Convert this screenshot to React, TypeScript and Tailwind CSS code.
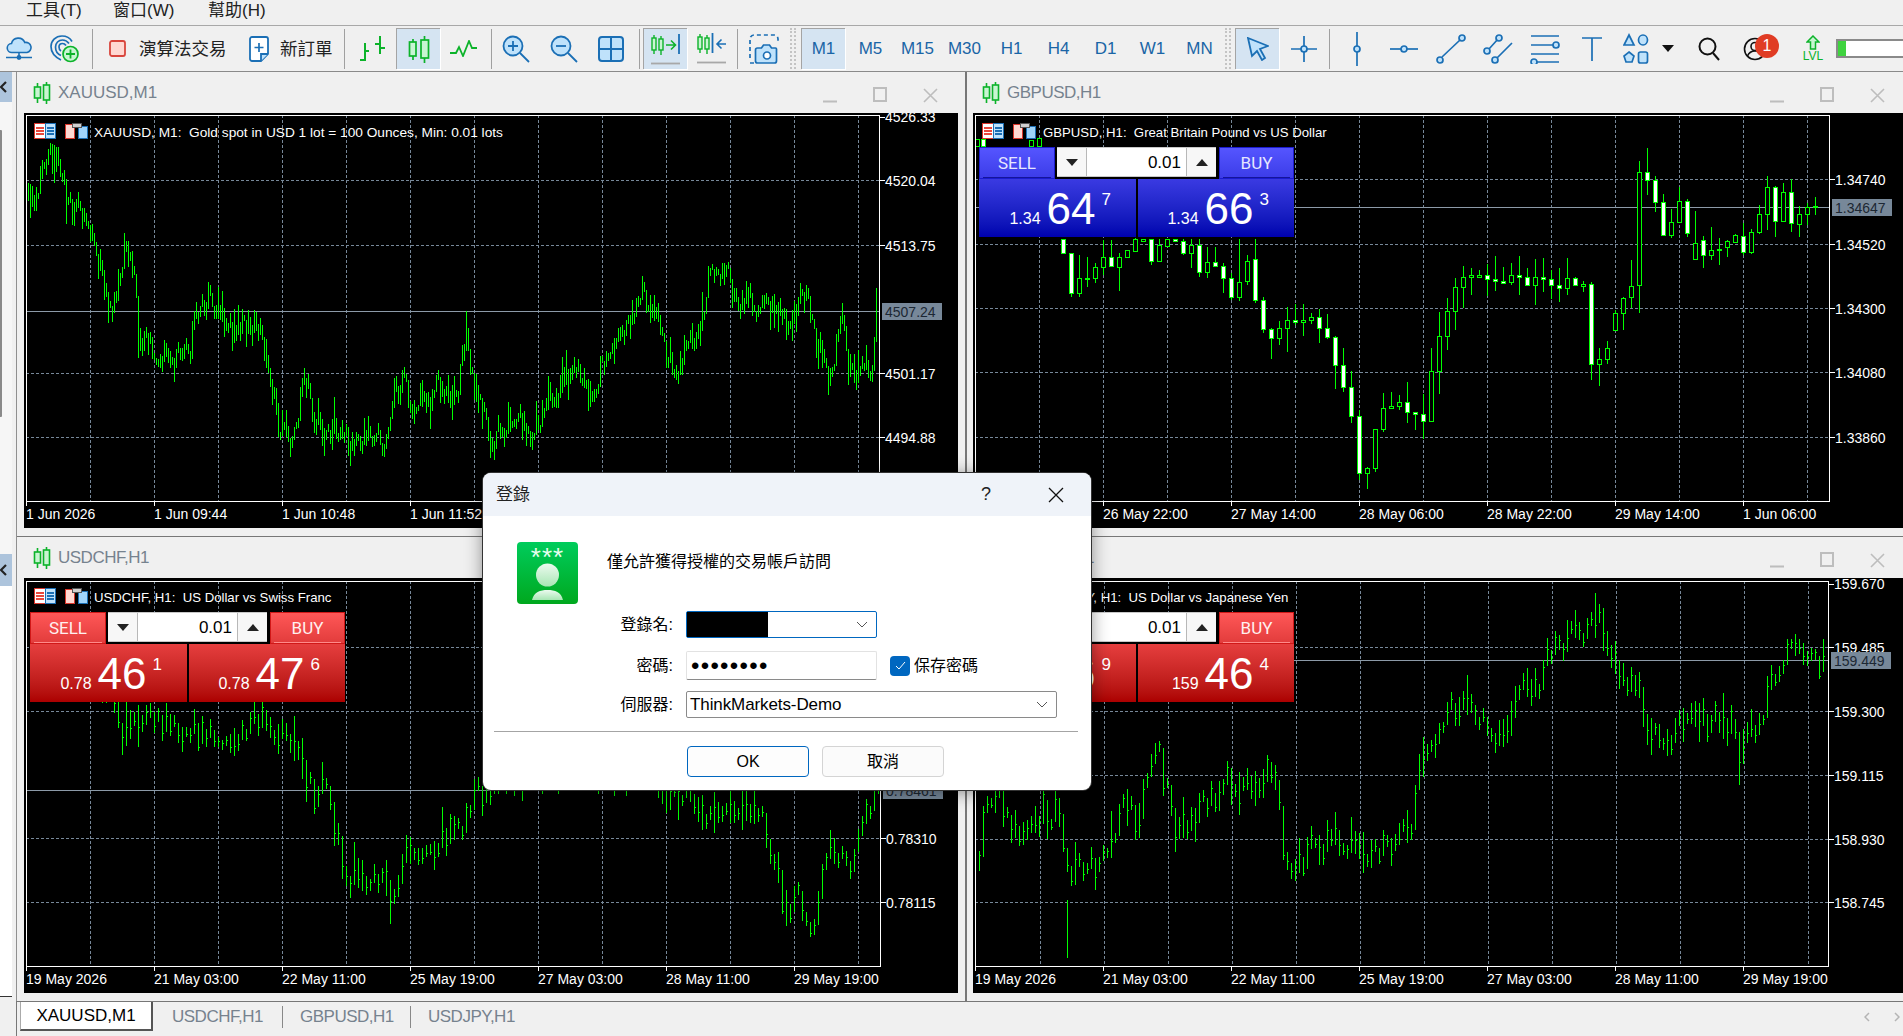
import React from 'react';

type P = [number, number];
const B = '#1b6fb5';
const F = '#bfe2fb';
const G = '#0cb32a';
const GF = '#c8f5d2';

function rng(seed: number) {
  let s = seed;
  return () => (s = (s * 16807) % 2147483647) / 2147483647;
}
function interp(pts: P[], x: number) {
  if (x <= pts[0][0]) return pts[0][1];
  for (let i = 1; i < pts.length; i++) {
    if (x <= pts[i][0]) {
      const [x0, y0] = pts[i - 1];
      const [x1, y1] = pts[i];
      return y0 + ((y1 - y0) * (x - x0)) / (x1 - x0);
    }
  }
  return pts[pts.length - 1][1];
}
function barsPath(pts: P[], x0: number, x1: number, step: number, seed: number, noise: number, a: number, b: number, ticks: boolean) {
  const r = rng(seed);
  let d = '';
  let prev = interp(pts, x0);
  for (let x = x0; x <= x1; x += step) {
    const base = interp(pts, x);
    const mid = base + (r() - 0.5) * noise;
    const h = a + r() * r() * (b - a);
    const t = Math.round(Math.min(mid - h, prev + 2));
    const l = Math.round(Math.max(mid + h, prev - 2));
    d += `M${x + 0.5} ${t}V${l}`;
    if (ticks) {
      const c = Math.round(mid + (r() - 0.5) * h) + 0.5;
      d += `M${x + 0.5} ${c}h1.5`;
    }
    prev = mid;
  }
  return d;
}

const xauPts: P[] = [[28,203],[43,173],[47,150],[60,163],[65,197],[80,210],[88,233],[100,267],[113,317],[117,283],[125,250],[135,270],[138,343],[147,340],[160,357],[177,357],[190,353],[195,310],[203,300],[217,307],[230,333],[250,327],[263,337],[270,377],[280,433],[292,440],[302,390],[308,377],[315,417],[323,430],[333,427],[353,447],[373,433],[388,443],[393,390],[405,377],[413,407],[430,403],[437,387],[457,392],[462,357],[467,333],[473,383],[483,403],[490,456],[497,436],[513,416],[530,433],[547,406],[563,380],[580,373],[590,403],[603,366],[617,333],[630,323],[643,290],[657,320],[667,353],[677,370],[687,340],[700,336],[707,283],[713,273],[728,276],[737,310],[747,293],[757,310],[763,296],[780,316],[790,333],[800,303],[808,303],[815,340],[827,373],[830,390],[838,330],[843,320],[848,376],[867,370],[872,376],[875,313],[878,310]];
const chfPts: P[] = [[30,650],[80,655],[115,700],[119,730],[143,720],[170,720],[191,733],[224,730],[239,743],[260,720],[284,733],[302,763],[314,797],[329,783],[338,833],[347,873],[380,880],[395,907],[404,843],[428,860],[440,833],[460,827],[470,797],[482,793],[500,777],[560,770],[640,770],[697,803],[721,820],[745,800],[769,833],[781,893],[787,920],[799,887],[811,927],[823,880],[835,843],[850,867],[859,833],[871,807],[878,800]];
const jpyPts: P[] = [[980,873],[983,807],[1001,800],[1019,847],[1031,823],[1043,807],[1058,813],[1067,873],[1091,870],[1109,847],[1126,807],[1138,830],[1150,760],[1162,760],[1174,840],[1192,823],[1210,797],[1228,780],[1252,780],[1276,763],[1285,873],[1300,860],[1324,840],[1348,847],[1378,853],[1396,833],[1410,823],[1420,767],[1437,747],[1449,707],[1467,703],[1485,733],[1503,737],[1521,697],[1539,680],[1548,647],[1563,640],[1581,630],[1596,620],[1608,640],[1617,673],[1635,680],[1647,733],[1665,737],[1683,717],[1707,723],[1730,727],[1739,753],[1748,733],[1760,727],[1766,700],[1775,673],[1784,653],[1802,660],[1823,660]];

type C = { x: number; t: number; b: number; hi: number; lo: number; f: boolean };
const z5 = [[310,418,460,418,460,1],[334,460,580,460,592,1],[358,535,578,465,592,0],[382,534,537,470,560,0],[406,502,535,490,550,0],[430,470,502,420,525,0],[454,470,498,420,500,1],[478,472,500,460,572,0],[502,450,472,450,475,0],[526,418,452,415,455,0],[550,418,423,418,424,0],[574,418,482,418,495,1],[598,435,482,418,485,0],[622,418,437,418,437,0],[646,418,423,418,427,1],[670,422,460,418,465,1],[694,435,460,418,505,0],[718,435,517,418,530,1],[742,487,517,440,535,0],[766,487,497,440,500,1],[790,498,535,490,580,1],[814,535,590,520,600,1],[838,545,590,418,602,0],[862,484,544,465,555,0],[886,478,600,418,610,1]];
const z8 = [[46,670,720,660,720,0],[70,625,670,622,720,0],[94,587,622,510,655,0],[118,245,585,213,668,0],[142,245,270,175,315,1],[166,270,335,258,365,1],[190,335,436,312,436,1],[214,395,436,358,443,0],[238,332,395,292,395,0],[262,332,430,326,440,1],[286,458,508,363,508,0],[310,450,496,438,533,1],[334,481,496,410,509,0],[358,476,478,445,525,0],[382,454,472,450,500,0],[406,436,455,432,460,0],[430,437,487,400,495,1],[454,425,487,418,493,0],[478,371,425,345,432,0],[502,290,373,258,420,0],[526,290,394,288,440,1],[550,305,394,280,395,0],[574,305,400,268,425,1],[598,371,403,348,440,0],[622,350,371,340,405,0],[646,349,352,322,375,0]];
const gbpMid: P[] = [[1255,300],[1262,334],[1268,346],[1286,313],[1305,316],[1317,318],[1329,346],[1341,388],[1353,419],[1362,495],[1371,455],[1377,413],[1396,394],[1414,419],[1422,425],[1432,364],[1444,316],[1462,273],[1481,273],[1499,277],[1517,273],[1535,282],[1553,291],[1565,282],[1584,291],[1590,358],[1602,364],[1614,328]];

function gbpCandles(): C[] {
  const out: C[] = [];
  z5.forEach(a => out.push({ x: Math.round(960 + a[0] / 3), t: Math.round(100 + a[1] / 3), b: Math.round(100 + a[2] / 3), hi: Math.round(100 + a[3] / 3), lo: Math.round(100 + a[4] / 3), f: !!a[5] }));
  const r = rng(77);
  let prev = 300;
  for (let x = 1263; x < 1610; x += 8) {
    const c = Math.round(interp(gbpMid, x) + (r() - 0.5) * 14);
    const t = Math.min(prev, c);
    const b = Math.max(prev, c, t + 2);
    out.push({ x, t, b, hi: t - Math.round(r() * 24), lo: b + Math.round(r() * 24), f: c > prev });
    prev = c;
  }
  z8.forEach(a => out.push({ x: Math.round(1600 + a[0] / 3), t: Math.round(90 + a[1] / 3), b: Math.round(90 + a[2] / 3), hi: Math.round(90 + a[3] / 3), lo: Math.round(90 + a[4] / 3), f: !!a[5] }));
  out.push({ x: 977, t: 139, b: 146, hi: 139, lo: 146, f: false });
  out.push({ x: 983, t: 139, b: 146, hi: 139, lo: 146, f: true });
  out.push({ x: 1031, t: 140, b: 146, hi: 140, lo: 146, f: false });
  out.push({ x: 1039, t: 138, b: 146, hi: 138, lo: 146, f: false });
  return out;
}

function LegendIcons({ x, y }: { x: number; y: number }) {
  return (
    <g transform={`translate(${x} ${y})`} shapeRendering="crispEdges">
      <rect x="0.5" y="0.5" width="21" height="15" fill="#fff" stroke="#d9362b" />
      <rect x="11" y="0.5" width="10.5" height="15" fill="#bfe2fb" stroke="#1b6fb5" />
      <path d="M2 4.5h8M2 7.5h8M2 10.5h8" stroke="#e8483c" strokeWidth="2" />
      <path d="M13 4.500h7M13 7.500h7M13 10.500h7" stroke="#1b6fb5" strokeWidth="2" />
      <path d="M40 1.500h-8.500v14h9v-10z" fill="#ffd9d2" stroke="#d9362b" />
      <rect x="44.500" y="3.500" width="9" height="12" fill="#9fd4fa" stroke="#1b6fb5" />
      <rect x="38" y="0" width="9" height="4" fill="#cfcfcf" stroke="#555" strokeWidth="1" />
    </g>
  );
}

type ChartSpec = {
  box: [number, number, number, number];
  plot: [number, number, number, number];
  vs: number[];
  hs: [number, string][];
  times: [number, string][];
  ticks: number[];
  top?: [number, string];
  cur: [number, string];
  legend: [number, number, number, string];
  legendSize: string;
  path?: string;
  candles?: C[];
};

function ChartSvg({ s }: { s: ChartSpec }) {
  const [bx, by, bw, bh] = s.box;
  const [l, t, r, b] = s.plot;
  return (
    <svg viewBox={`${bx} ${by} ${bw} ${bh}`} width={bw} height={bh} className="block">
      <g shapeRendering="crispEdges" stroke="#778899" strokeDasharray="3 2">
        {s.vs.map(x => <path key={x} d={`M${x + 0.5} ${t}V${b}`} />)}
        {s.hs.map(([y]) => <path key={y} d={`M${l} ${y + 0.5}H${r}`} />)}
      </g>
      <path d={`M${l} ${s.cur[0] + 0.5}H${r}`} stroke="#8c9aa8" shapeRendering="crispEdges" />
      {s.path && <path d={s.path} stroke="#00ff00" fill="none" shapeRendering="crispEdges" />}
      {s.candles && (
        <g shapeRendering="crispEdges">
          {s.candles.map((c, i) => (
            <g key={i}>
              <path d={`M${c.x + 0.5} ${c.hi}V${c.lo}`} stroke="#00ff00" />
              <rect x={c.x - 1.5} y={c.t + 0.5} width={4} height={Math.max(1, c.b - c.t)} fill={c.f ? '#fff' : '#000'} stroke="#00ff00" />
            </g>
          ))}
        </g>
      )}
      <g shapeRendering="crispEdges" stroke="#fff" fill="none">
        <path d={`M${l + 0.5} ${b + 0.5}V${t + 0.5}H${r + 0.5}V${b + 0.5}H${l + 0.5}`} />
        {s.ticks.map(x => <path key={x} d={`M${x + 0.5} ${b}v5`} />)}
        {s.hs.map(h => <path key={h[0]} d={`M${r} ${h[0] + 0.5}h6`} />)}
        {s.top && <path d={`M${r} ${s.top[0] + 0.5}h6`} />}
      </g>
      <g className="text-[14px]" fill="#fff">
        {s.hs.map(([y, v]) => <text key={y} x={r + 6} y={y + 5.5}>{v}</text>)}
        {s.top && <text x={r + 6} y={s.top[0] + 5}>{s.top[1]}</text>}
        {s.times.map(([x, v]) => <text key={x} x={x - 1} y={b + 18}>{v}</text>)}
      </g>
      <text x={s.legend[2]} y={s.legend[1] + 13.5} fill="#fff" className={`whitespace-pre ${s.legendSize}`}>{s.legend[3]}</text>
      <rect x={r + 3} y={s.cur[0] - 8} width={60} height={17} fill="#778899" />
      <text x={r + 6} y={s.cur[0] + 5.5} fill="#1c2733" className="text-[14px]">{s.cur[1]}</text>
      <LegendIcons x={s.legend[0]} y={s.legend[1]} />
    </svg>
  );
}

const range = (a: number, n: number, st: number) => Array.from({ length: n }, (_, i) => a + i * st);

const specs: Record<string, ChartSpec> = {
  xau: {
    box: [24, 113, 933, 415], plot: [26, 115, 879, 501], vs: range(90, 13, 64), hs: [[180,'4520.04'],[245,'4513.75'],[373,'4501.17'],[437,'4494.88']],
    times: [[27,'1 Jun 2026'],[155,'1 Jun 09:44'],[283,'1 Jun 10:48'],[411,'1 Jun 11:52'],[539,'1 Jun 12:56'],[667,'1 Jun 14:00'],[795,'1 Jun 15:04']],
    ticks: range(26, 7, 128), top: [117,'4526.33'], cur: [311,'4507.24'], legend: [34, 123, 94, 'XAUUSD, M1:  Gold spot in USD 1 lot = 100 Ounces, Min: 0.01 lots'], legendSize: 'text-[13.7px]',
    path: barsPath(xauPts, 28, 877, 2, 4242, 26, 3, 20, false),
  },
  gbp: {
    box: [973, 113, 930, 415], plot: [975, 115, 1829, 501], vs: range(1039, 13, 64), hs: [[179,'1.34740'],[244,'1.34520'],[308,'1.34300'],[372,'1.34080'],[437,'1.33860']],
    times: [[976,'26 May 06:00'],[1104,'26 May 22:00'],[1232,'27 May 14:00'],[1360,'28 May 06:00'],[1488,'28 May 22:00'],[1616,'29 May 14:00'],[1744,'1 Jun 06:00']],
    ticks: range(975, 7, 128), cur: [207,'1.34647'], legend: [982, 123, 1043, 'GBPUSD, H1:  Great Britain Pound vs US Dollar'], legendSize: 'text-[13.2px]',
    candles: gbpCandles(),
  },
  chf: {
    box: [24, 578, 933, 415], plot: [26, 581, 880, 966], vs: range(90, 13, 64), hs: [[647,'0.78700'],[711,'0.78505'],[838,'0.78310'],[902,'0.78115']],
    times: [[27,'19 May 2026'],[155,'21 May 03:00'],[283,'22 May 11:00'],[411,'25 May 19:00'],[539,'27 May 03:00'],[667,'28 May 11:00'],[795,'29 May 19:00']],
    ticks: range(26, 7, 128), cur: [790,'0.78461'], legend: [34, 588, 94, 'USDCHF, H1:  US Dollar vs Swiss Franc'], legendSize: 'text-[13.2px]',
    path: barsPath(chfPts, 30, 878, 4, 991, 30, 5, 26, true),
  },
  jpy: {
    box: [973, 578, 930, 415], plot: [975, 581, 1828, 966], vs: range(1040, 13, 64), hs: [[647,'159.485'],[711,'159.300'],[775,'159.115'],[839,'158.930'],[902,'158.745']],
    times: [[976,'19 May 2026'],[1104,'21 May 03:00'],[1232,'22 May 11:00'],[1360,'25 May 19:00'],[1488,'27 May 03:00'],[1616,'28 May 11:00'],[1744,'29 May 19:00']],
    ticks: range(975, 7, 128), top: [584,'159.670'], cur: [660,'159.449'], legend: [982, 588, 1043, 'USDJPY, H1:  US Dollar vs Japanese Yen'], legendSize: 'text-[13.2px]',
    path: barsPath(jpyPts, 979, 1824, 4, 5150, 30, 5, 26, true) + 'M1067.5 900V958',
  },
};

function PriceCell({ tone, head, big, sup, w }: { tone: 'blue' | 'red'; head: string; big: string; sup: string; w: string }) {
  return (
    <div className={`${w} h-[58px] flex items-baseline justify-end pr-[25px] pt-[8px] text-white bg-linear-to-b ${tone === 'blue' ? 'from-[#3a3ae2] to-[#0000ae]' : 'from-[#e63e3e] to-[#ac0000]'}`}>
      <span className="text-[16px] leading-none mr-[6px]">{head}</span>
      <span className="text-[44px] leading-[44px]">{big}</span>
      <span className="self-start mt-[4px] ml-[6px] text-[17px] leading-none">{sup}</span>
    </div>
  );
}

function Panel({ tone, a, b }: { tone: 'blue' | 'red'; a: [string, string, string]; b: [string, string, string] }) {
  const top = tone === 'blue'
    ? 'from-[#5555ff] to-[#3c3ce8] border-[#1c1ccf] text-[#e6e6ff]'
    : 'from-[#ff5757] to-[#e23c3c] border-[#d01818] text-[#fff0f0]';
  const rule = tone === 'blue' ? 'border-[#15159a]' : 'border-[#ff8a8a]';
  return (
    <div className="absolute left-[6px] top-[34px] w-[315px] h-[90px] bg-black">
      <div className="flex h-[32px]">
        <div className={`w-[76px] h-[32px] border px-[3px] bg-linear-to-b ${top} font-['Roboto',sans-serif]`}>
          <div className={`h-[30px] border-b text-[17px] leading-[31px] text-center ${rule}`}>SELL</div>
        </div>
        <div className="ml-[2px] w-[159px] h-[30px] flex bg-white border-y border-[#c8c8c8]">
          <div className="w-[30px] bg-[#f7f7f7] border-r border-[#b8b8b8] flex items-center justify-center">
            <svg width="12" height="7" viewBox="0 0 12 7"><path d="M0 0h12L6 7z" fill="#222" /></svg>
          </div>
          <div className="flex-1 text-right pr-[5px] text-[17px] leading-[30px] text-black">0.01</div>
          <div className="w-[30px] bg-[#f7f7f7] border-l border-[#b8b8b8] flex items-center justify-center">
            <svg width="12" height="7" viewBox="0 0 12 7"><path d="M0 7h12L6 0z" fill="#222" /></svg>
          </div>
        </div>
        <div className={`ml-[3px] w-[75px] h-[32px] border px-[3px] bg-linear-to-b ${top} font-['Roboto',sans-serif]`}>
          <div className={`h-[30px] border-b text-[17px] leading-[31px] text-center ${rule}`}>BUY</div>
        </div>
      </div>
      <div className="flex gap-[2px]">
        <PriceCell tone={tone} head={a[0]} big={a[1]} sup={a[2]} w="w-[157px]" />
        <PriceCell tone={tone} head={b[0]} big={b[1]} sup={b[2]} w="w-[156px]" />
      </div>
    </div>
  );
}

function TitleCandle() {
  return (
    <svg width="18" height="22" viewBox="0 0 18 22" fill={GF} stroke={G} strokeWidth="1.6">
      <path d="M4.5 1v4M4.5 16v5M13.5 0v3M13.5 18v4" fill="none" />
      <rect x="1.5" y="5" width="6" height="11" />
      <rect x="10.5" y="3" width="6" height="15" />
    </svg>
  );
}

function WinBtns({ pr }: { pr: string }) {
  return (
    <div className={`ml-auto flex items-center pt-[5px] ${pr}`}>
      <div className="w-[50px] flex justify-center">
        <svg width="16" height="16" viewBox="0 0 16 16"><path d="M1 14.5h14" stroke="#bdbdbd" strokeWidth="2" /></svg>
      </div>
      <div className="w-[50px] flex justify-center">
        <svg width="14" height="16" viewBox="0 0 14 16"><rect x="1" y="1" width="12" height="13" fill="none" stroke="#bdbdbd" strokeWidth="2" /></svg>
      </div>
      <div className="w-[50px] flex justify-center">
        <svg width="15" height="15" viewBox="0 0 15 15"><path d="M1 1l13 13M14 1L1 14" stroke="#bdbdbd" strokeWidth="1.6" /></svg>
      </div>
    </div>
  );
}

function ChartWindow({ title, titleCn, spec, side, panel }: { title: string; titleCn?: string; spec: ChartSpec; side: 'l' | 'r'; panel?: React.ReactNode }) {
  return (
    <div className={`h-[464px] ${side === 'l' ? 'pl-[7px] pr-[7px]' : 'pl-[6px]'}`}>
      <div className={`h-[41px] flex items-center gap-[7px] ${side === 'l' ? '-ml-[7px] -mr-[7px] pl-[16px]' : '-ml-[6px] pl-[15px]'}`}>
        <TitleCandle />
        <span className={`text-[17px] text-[#76828e] ${titleCn ?? ''}`}>{title}</span>
        <WinBtns pr={side === 'l' ? 'pr-[10px]' : 'pr-[1px]'} />
      </div>
      <div className="relative h-[415px] bg-black">
        <ChartSvg s={spec} />
        {panel}
      </div>
    </div>
  );
}

function ToolBtn({ w, active, cn, children }: { w: string; active?: boolean; cn?: string; children: React.ReactNode }) {
  return (
    <div className={`${w} h-[41px] shrink-0 flex items-center justify-center ${active ? 'bg-[#d5e4f2] border-t border-l border-[#a4a4a4] shadow-[1px_1px_0_#fff]' : ''} ${cn ?? ''}`}>
      {children}
    </div>
  );
}
const Sep = () => <div className="w-px h-[40px] bg-[#a0a0a0] shrink-0" />;
const Grip = () => <div className="w-[6px] h-[41px] shrink-0 border-x-2 border-dotted border-[#c4c4c4]" />;
const Tf = ({ w, active, v }: { w: string; active?: boolean; v: string }) => (
  <ToolBtn w={w} active={active}><span className="text-[17px] text-[#1a65a6]">{v}</span></ToolBtn>
);

const CloudI = () => (
  <svg width="28" height="24" viewBox="0 0 28 24" fill={F} stroke={B} strokeWidth="1.6">
    <path d="M7 15.5a4.5 4.5 0 0 1-.5-9 7 7 0 0 1 13.3-1A5 5 0 0 1 22 15.5z" />
    <path d="M14 15.5v5M1 20.5h26" fill="none" />
    <circle cx="14" cy="20.5" r="1.6" fill={B} />
  </svg>
);
const SignalI = () => (
  <svg width="30" height="28" viewBox="0 0 30 28" fill="none" stroke={B} strokeWidth="1.7">
    <path d="M11 25C5 22 1 17 1 11.5 1 6 5.5 1 12 1c4.500 0 8 2 10 5.500" />
    <path d="M11 20.500C7.500 19 5.500 15.500 5.500 12 5.500 8 8.500 5 12.500 5c3 0 5 1.500 6.500 3.500" />
    <path d="M11 16c-1.500-1-2-2.500-2-4 0-2 1.500-3.500 3.500-3.500 1.500 0 2.500.5 3.500 2" />
    <circle cx="20.500" cy="19" r="7.500" fill={GF} stroke={G} />
    <path d="M20.500 14.500v9M16 19h9" stroke={G} strokeWidth="1.800" />
  </svg>
);
const StopI = () => (
  <svg width="17" height="17" viewBox="0 0 17 17"><rect x="1" y="1" width="15" height="15" rx="2" fill="#ffd8d2" stroke="#d9453c" strokeWidth="1.800" /></svg>
);
const DocI = () => (
  <svg width="20" height="26" viewBox="0 0 20 26" fill="#fff" stroke={B} strokeWidth="1.800">
    <path d="M3 1h14a2 2 0 0 1 2 2v15l-7 7H3a2 2 0 0 1-2-2V3a2 2 0 0 1 2-2z" />
    <path d="M19 18h-7v7" fill={F} />
    <path d="M10 7v9M5.500 11.500h9" strokeWidth="1.700" />
  </svg>
);
const BarsI = () => (
  <svg width="26" height="27" viewBox="0 0 26 27" fill="none" stroke={G} strokeWidth="2">
    <path d="M6 8v18M1 25h5M6 16h4M21 1v18M16 9h5M21 13h5" />
  </svg>
);
const CandleI = () => (
  <svg width="22" height="27" viewBox="0 0 22 27" fill={GF} stroke={G} strokeWidth="1.700">
    <path d="M5 3v5M5 20v4M16.500 0v5M16.500 21v6" fill="none" />
    <rect x="1.500" y="6" width="6.500" height="14" />
    <rect x="13" y="4" width="7.500" height="18" />
  </svg>
);
const LineI = () => (
  <svg width="27" height="17" viewBox="0 0 27 17" fill="none" stroke={G} strokeWidth="1.800"><path d="M0 13h6l3-6 4 9 6-15 3 7h5" /></svg>
);
const ZoomI = ({ plus }: { plus?: boolean }) => (
  <svg width="28" height="28" viewBox="0 0 28 28" fill="none" stroke={B} strokeWidth="1.800">
    <circle cx="11" cy="11" r="9.500" fill={F} />
    <path d="M18 18l9 9" />
    <path d={plus ? 'M11 6v10M6 11h10' : 'M6 11h10'} />
  </svg>
);
const TileI = () => (
  <svg width="26" height="26" viewBox="0 0 26 26" fill={F} stroke={B} strokeWidth="2">
    <rect x="1" y="1" width="24" height="24" rx="3" />
    <path d="M13 1v24M1 13h24" />
  </svg>
);
const MiniC = () => (
  <g fill={GF} stroke={G} strokeWidth="1.400">
    <path d="M3 0v3M3 15v4M10 1v3M10 15v5" fill="none" />
    <rect x="1" y="3" width="4" height="12" />
    <rect x="8" y="4" width="4" height="11" />
  </g>
);
const AutoI = () => (
  <svg width="30" height="33" viewBox="0 0 30 33" fill="none">
    <g transform="translate(0 2)"><MiniC /></g>
    <path d="M15 12h9M20 7.500l4.500 4.500-4.500 4.500" stroke={G} strokeWidth="1.600" />
    <path d="M28 1v20" stroke={B} strokeWidth="1.800" />
    <path d="M0 30.500h29" stroke="#a8a8a8" strokeWidth="1.800" />
  </svg>
);
const ShiftI = () => (
  <svg width="30" height="33" viewBox="0 0 30 33" fill="none">
    <g transform="translate(0 2)"><MiniC /></g>
    <path d="M15.500 1v20" stroke={B} strokeWidth="1.800" />
    <path d="M29 12h-9M24.500 7.500L20 12l4.500 4.500" stroke={B} strokeWidth="1.600" />
    <path d="M0 30.500h29" stroke="#a8a8a8" strokeWidth="1.800" />
  </svg>
);
const ShotI = () => (
  <svg width="30" height="30" viewBox="0 0 30 30" fill="none" stroke={B} strokeWidth="1.700">
    <path d="M1 24V5a4 4 0 0 1 4-4h20a4 4 0 0 1 4 4v4M5 29H1" strokeDasharray="4 3" />
    <path d="M10 14h4l2-3h6l2 3h4a1 1 0 0 1 1 1v12a2 2 0 0 1-2 2H10a2 2 0 0 1-2-2V16a2 2 0 0 1 2-2z" fill={F} transform="translate(-1.500 0)" />
    <circle cx="18" cy="21.500" r="3.500" fill="#fff" />
  </svg>
);
const CursorI = () => (
  <svg width="22" height="24" viewBox="0 0 22 24" fill={F} stroke={B} strokeWidth="1.800"><path d="M1 1l20 8-8 3 5 9-3 2-5-9-5 5z" /></svg>
);
const CrossI = () => (
  <svg width="26" height="26" viewBox="0 0 26 26" fill="none" stroke={B} strokeWidth="1.700">
    <path d="M13 0v26M0 13h26" /><circle cx="13" cy="13" r="3" fill={F} />
  </svg>
);
const VLineI = () => (
  <svg width="8" height="34" viewBox="0 0 8 34" fill="none" stroke={B} strokeWidth="1.700"><path d="M4 0v34" /><circle cx="4" cy="17" r="3" fill={F} /></svg>
);
const HLineI = () => (
  <svg width="28" height="8" viewBox="0 0 28 8" fill="none" stroke={B} strokeWidth="1.700"><path d="M0 4h28" /><circle cx="14" cy="4" r="3" fill={F} /></svg>
);
const TrendI = () => (
  <svg width="30" height="30" viewBox="0 0 30 30" fill="none" stroke={B} strokeWidth="1.700">
    <path d="M6 23L24 6" /><circle cx="4" cy="26" r="3" fill={F} /><circle cx="26" cy="4" r="3" fill={F} />
  </svg>
);
const ChannelI = () => (
  <svg width="30" height="30" viewBox="0 0 30 30" fill="none" stroke={B} strokeWidth="1.700">
    <path d="M6 15l9-10M14 24l15-15" /><circle cx="4" cy="17" r="3" fill={F} /><circle cx="16" cy="4" r="3" fill={F} /><circle cx="12" cy="26" r="3" fill={F} />
  </svg>
);
const FiboI = () => (
  <svg width="30" height="30" viewBox="0 0 30 30" fill="none" stroke={B} strokeWidth="1.700">
    <path d="M1 2h28M1 11h24M1 20h28M6 28h23" /><circle cx="26" cy="11" r="3" fill={F} /><circle cx="4" cy="28" r="3" fill={F} />
  </svg>
);
const TextI = () => (
  <svg width="20" height="24" viewBox="0 0 20 24" fill="none" stroke={B} strokeWidth="1.700"><path d="M0 1h20M10 1v23" /></svg>
);
const ShapesI = () => (
  <svg width="26" height="32" viewBox="0 0 26 32" fill={F} stroke={B} strokeWidth="1.700">
    <path d="M6 2l5 10H1z" /><ellipse cx="20" cy="7" rx="4.500" ry="5" />
    <path d="M6 19l5 4-2 6H3l-2-6z" /><rect x="15.500" y="19" width="9" height="11" rx="2" />
  </svg>
);
const SearchI = () => (
  <svg width="22" height="24" viewBox="0 0 22 24" fill="none" stroke="#111" strokeWidth="2"><circle cx="9.500" cy="9.500" r="8" /><path d="M15 16l6 7" /></svg>
);
const UserI = () => (
  <svg width="24" height="24" viewBox="0 0 24 24" fill="none" stroke="#111" strokeWidth="1.600">
    <circle cx="12" cy="12" r="10.500" /><circle cx="12" cy="9.500" r="4" /><path d="M4.500 19c1.500-3.500 4-5 7.500-5s6 1.500 7.500 5" />
  </svg>
);

function Chevron() {
  return <svg width="12" height="7" viewBox="0 0 12 7" fill="none" stroke="#555" strokeWidth="1"><path d="M1 1l5 5 5-5" /></svg>;
}

function Dialog() {
  const label = 'w-[190px] pr-0 text-right text-[16px] text-black';
  return (
    <div className="absolute left-[483px] top-[473px] w-[608px] h-[317px] rounded-[8px] overflow-hidden bg-white ring-1 ring-[#333] shadow-[0_2px_18px_rgba(0,0,0,0.45)]">
      <div className="relative h-[43px] bg-[#eff3f9] flex items-center pl-[13px]">
        <span className="text-[17px] text-[#222]">登錄</span>
        <span className="absolute left-[498px] text-[18px] text-[#222]">?</span>
        <svg className="absolute left-[565px]" width="16" height="16" viewBox="0 0 16 16" stroke="#111" strokeWidth="1.300"><path d="M1 1l14 14M15 1L1 15" /></svg>
      </div>
      <div className="flex pl-[34px] pt-[26px]">
        <svg width="61" height="62" viewBox="0 0 61 62">
          <defs>
            <linearGradient id="gi" x1="0" y1="0" x2="0" y2="1"><stop offset="0" stopColor="#00cc5c" /><stop offset="1" stopColor="#00a81e" /></linearGradient>
            <linearGradient id="gp" x1="0" y1="0" x2="0" y2="1"><stop offset="0" stopColor="#ecfaef" /><stop offset="1" stopColor="#a8e6b4" /></linearGradient>
          </defs>
          <rect width="61" height="62" rx="4" fill="url(#gi)" />
          <text x="30.500" y="24" textAnchor="middle" fill="#e8fff0" fontSize="26" letterSpacing="1">***</text>
          <ellipse cx="30.500" cy="33" rx="11.500" ry="11.500" fill="url(#gp)" />
          <path d="M15 58c2-8 8-10 15.500-10S44 50 46 58z" fill="url(#gp)" />
        </svg>
        <div className="pl-[29px] pt-[9px] text-[16px] leading-[22px] text-black">僅允許獲得授權的交易帳戶訪問</div>
      </div>
      <div className="mt-[7px] flex items-center h-[27px]">
        <div className={label}>登錄名:</div>
        <div className="ml-[13px] w-[191px] h-[27px] border border-[#0067c0] rounded-[2px] bg-white flex items-center pr-[8px]">
          <div className="w-[81px] h-full bg-black" />
          <div className="ml-auto"><Chevron /></div>
        </div>
      </div>
      <div className="mt-[13px] flex items-center h-[29px]">
        <div className={label}>密碼:</div>
        <div className="ml-[13px] w-[191px] h-[29px] border border-[#e2e2e2] border-b-[#8a8a8a] rounded-[2px] bg-white pl-[4px] text-[24px] leading-[27px] tracking-[1.300px] text-black overflow-hidden">••••••••</div>
        <div className="ml-[13px] w-[20px] h-[20px] rounded-[4px] bg-[#0067c0] flex items-center justify-center">
          <svg width="11" height="9" viewBox="0 0 11 9" fill="none" stroke="#fff" strokeWidth="1"><path d="M1 5l3 3 6-7" /></svg>
        </div>
        <div className="ml-[4px] text-[16px] text-black">保存密碼</div>
      </div>
      <div className="mt-[11px] flex items-center h-[27px]">
        <div className={label}>伺服器:</div>
        <div className="ml-[13px] w-[371px] h-[27px] border border-[#8a8a8a] rounded-[2px] bg-white flex items-center pl-[3px] pr-[8px]">
          <span className="text-[17px] text-black tracking-[-0.1px]">ThinkMarkets-Demo</span>
          <div className="ml-auto"><Chevron /></div>
        </div>
      </div>
      <div className="mt-[13px] ml-[11px] w-[584px] h-px bg-[#a4a4a4]" />
      <div className="mt-[14px] pl-[204px] flex gap-[13px]">
        <div className="w-[122px] h-[31px] border border-[#0067c0] rounded-[4px] bg-[#fdfdfd] text-center text-[16px] leading-[29px] text-black">OK</div>
        <div className="w-[122px] h-[31px] border border-[#d4d4d4] rounded-[4px] bg-[#fbfbfb] text-center text-[16px] leading-[29px] text-black">取消</div>
      </div>
    </div>
  );
}

const Handle = ({ h }: { h: string }) => (
  <div className={`${h} w-[12px] bg-[#adc4dc] flex items-center`}>
    <svg width="7" height="12" viewBox="0 0 7 12" fill="none" stroke="#222" strokeWidth="2.200"><path d="M6 1L1 6l5 5" /></svg>
  </div>
);

export default function App() {
  return (
    <div className="relative w-[1903px] h-[1036px] overflow-hidden bg-[#f0f0f0] font-['Liberation_Sans','Noto_Sans_CJK_TC',sans-serif] text-black">
      <div className="h-[26px] border-b border-[#a8a8a8] flex items-center pl-[26px] pb-[3px] text-[17px] text-[#222]">
        <span className="w-[87px]">工具(T)</span>
        <span className="w-[95px]">窗口(W)</span>
        <span>幫助(H)</span>
      </div>

      <div className="h-[46px] border-b border-[#8a8a8a] flex items-center">
        <ToolBtn w="w-[38px]"><CloudI /></ToolBtn>
        <ToolBtn w="w-[54px]"><SignalI /></ToolBtn>
        <Sep />
        <ToolBtn w="w-[147px]" cn="pl-[16px] !justify-start">
          <StopI /><span className="ml-[13px] mt-[2px] text-[17.5px] text-[#222]">演算法交易</span>
        </ToolBtn>
        <ToolBtn w="w-[104px]" cn="pl-[9px] !justify-start">
          <DocI /><span className="ml-[11px] mt-[2px] text-[17.5px] text-[#222]">新訂單</span>
        </ToolBtn>
        <Sep />
        <ToolBtn w="w-[51px]" cn="pl-[3px]"><BarsI /></ToolBtn>
        <ToolBtn w="w-[44px]" active><CandleI /></ToolBtn>
        <ToolBtn w="w-[51px]" cn="pr-[5px]"><LineI /></ToolBtn>
        <Sep />
        <ToolBtn w="w-[48px]"><ZoomI plus /></ToolBtn>
        <ToolBtn w="w-[48px]"><ZoomI /></ToolBtn>
        <ToolBtn w="w-[46px]"><TileI /></ToolBtn>
        <div className="w-[5px]" />
        <Sep />
        <div className="w-[3px]" />
        <ToolBtn w="w-[44px]" active><AutoI /></ToolBtn>
        <ToolBtn w="w-[50px]"><ShiftI /></ToolBtn>
        <Sep />
        <ToolBtn w="w-[52px]"><ShotI /></ToolBtn>
        <Grip />
        <div className="w-[5px]" />
        <Tf w="w-[44px]" active v="M1" />
        <div className="w-[2px]" />
        <Tf w="w-[47px]" v="M5" />
        <Tf w="w-[47px]" v="M15" />
        <Tf w="w-[47px]" v="M30" />
        <Tf w="w-[47px]" v="H1" />
        <Tf w="w-[47px]" v="H4" />
        <Tf w="w-[47px]" v="D1" />
        <Tf w="w-[47px]" v="W1" />
        <Tf w="w-[47px]" v="MN" />
        <div className="w-[2px]" />
        <Grip />
        <div className="w-[4px]" />
        <ToolBtn w="w-[44px]" active><CursorI /></ToolBtn>
        <ToolBtn w="w-[50px]"><CrossI /></ToolBtn>
        <Sep />
        <ToolBtn w="w-[54px]"><VLineI /></ToolBtn>
        <ToolBtn w="w-[40px]"><HLineI /></ToolBtn>
        <ToolBtn w="w-[54px]"><TrendI /></ToolBtn>
        <ToolBtn w="w-[40px]"><ChannelI /></ToolBtn>
        <ToolBtn w="w-[54px]"><FiboI /></ToolBtn>
        <ToolBtn w="w-[40px]"><TextI /></ToolBtn>
        <ToolBtn w="w-[48px]"><ShapesI /></ToolBtn>
        <ToolBtn w="w-[16px]">
          <svg width="12" height="7" viewBox="0 0 12 7"><path d="M0 0h12L6 7z" fill="#111" /></svg>
        </ToolBtn>
        <ToolBtn w="w-[66px]"><SearchI /></ToolBtn>
        <ToolBtn w="w-[26px]" cn="relative">
          <UserI />
          <span className="absolute left-[13px] top-[6px] w-[24px] h-[24px] rounded-full bg-[#e03c24] text-white text-[16px] leading-[24px] text-center">1</span>
        </ToolBtn>
        <ToolBtn w="w-[68px]" cn="pl-[22px] flex-col">
          <svg width="14" height="15" viewBox="0 0 14 15" fill="#c8f5d2" stroke={G} strokeWidth="1.500"><path d="M7 1l6 6H9.500v7h-5V7H1z" /></svg>
          <span className="text-[12px] leading-[12px] text-[#0cb32a]">LVL</span>
        </ToolBtn>
        <div className="flex-1 h-[19px] bg-white border-y-2 border-l-2 border-[#8a8a8a]">
          <div className="w-[8px] h-full bg-[#3fd33f]" />
        </div>
      </div>

      <div className="flex h-[929px]">
        <div className="w-[17px] shrink-0 border-r border-[#8f8f8f] flex flex-col">
          <Handle h="h-[30px]" />
          <div className="w-[12px] h-[452px] bg-[#f6f6f6] pt-[28px]">
            <div className="w-[2px] h-[287px] bg-[#8a8a8a] rounded-r-[1px]" />
          </div>
          <Handle h="h-[32px]" />
          <div className="w-[12px] flex-1 bg-white border-b border-[#333] mb-[4px]" />
        </div>
        <div className="flex-1 grid grid-cols-[948px_2px_1fr] grid-rows-[464px_1px_464px]">
          <ChartWindow title="XAUUSD,M1" spec={specs.xau} side="l" />
          <div className="bg-[#777] row-span-3 w-[2px]" />
          <ChartWindow
            title="GBPUSD,H1"
            titleCn="tracking-[-0.5px]"
            spec={specs.gbp}
            side="r"
            panel={<Panel tone="blue" a={['1.34', '64', '7']} b={['1.34', '66', '3']} />}
          />
          <div className="h-px bg-[#777]" />
          <div className="h-px bg-[#777]" />
          <ChartWindow
            title="USDCHF,H1"
            titleCn="tracking-[-0.5px]"
            spec={specs.chf}
            side="l"
            panel={<Panel tone="red" a={['0.78', '46', '1']} b={['0.78', '47', '6']} />}
          />
          <ChartWindow
            title="USDJPY,H1"
            titleCn="tracking-[-0.5px]"
            spec={specs.jpy}
            side="r"
            panel={<Panel tone="red" a={['159', '46', '9']} b={['159', '46', '4']} />}
          />
        </div>
      </div>

      <div className="h-[35px] flex ml-[16px] border-t border-[#777] border-l text-[17px] text-[#76828e]">
        <div className="ml-[3px] w-[133px] h-[29px] bg-white border-r-2 border-b-2 border-[#555] border-l border-l-[#aaa] text-black text-center leading-[27px]">XAUUSD,M1</div>
        <div className="w-[130px] h-[22px] mt-[4px] pl-[19px] leading-[22px] border-r border-[#888] tracking-[-0.5px]">USDCHF,H1</div>
        <div className="w-[128px] h-[22px] mt-[4px] pl-[17px] leading-[22px] border-r border-[#888] tracking-[-0.5px]">GBPUSD,H1</div>
        <div className="h-[22px] mt-[4px] pl-[17px] leading-[22px] tracking-[-0.5px]">USDJPY,H1</div>
        <div className="ml-auto flex items-center gap-[24px] pr-[3px] pb-[4px]">
          <svg width="6" height="10" viewBox="0 0 6 10" fill="none" stroke="#b4b4b4" strokeWidth="1.500"><path d="M5 1L1 5l4 4" /></svg>
          <svg width="6" height="10" viewBox="0 0 6 10" fill="none" stroke="#b4b4b4" strokeWidth="1.500"><path d="M1 1l4 4-4 4" /></svg>
        </div>
      </div>

      <Dialog />
    </div>
  );
}
